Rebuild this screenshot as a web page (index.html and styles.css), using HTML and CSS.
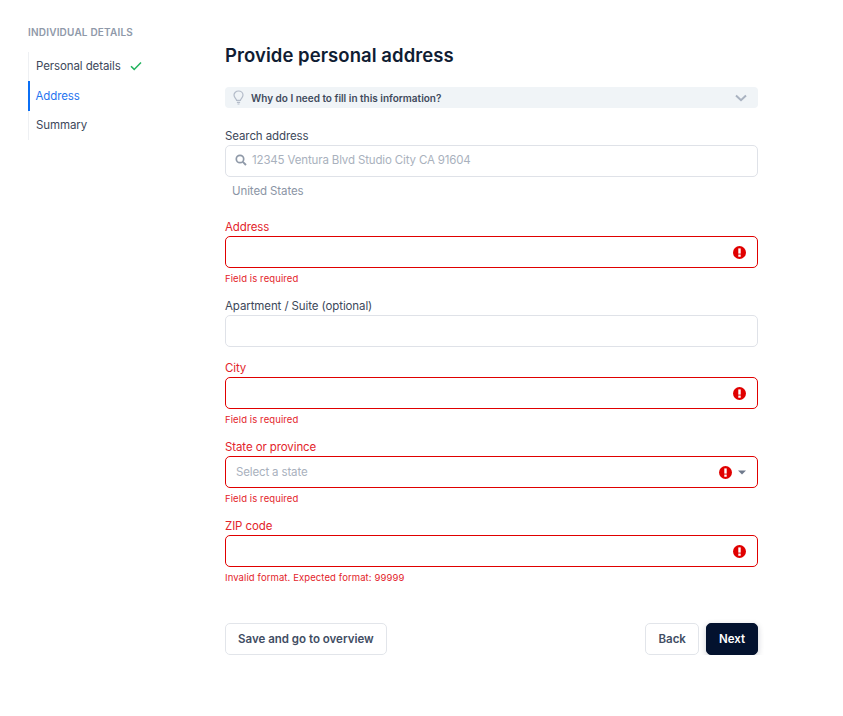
FILE: index.html
```html
<!DOCTYPE html>
<html>
<head>
  <title>Provide personal address</title>
  <link rel="stylesheet" href="styles.css">
</head>
<body>

  <div class="page">

    <div class="sidebar">
      <div class="sidebar-title">INDIVIDUAL DETAILS</div>
      <div class="steps">
        <div class="step">Personal details
          <svg class="check" width="12" height="10" viewBox="0 0 12 10"><path d="M1 5.2 4.2 8.4 11 1.4" fill="none" stroke="#22b35e" stroke-width="1.5"/></svg>
        </div>
        <div class="step active">Address</div>
        <div class="step">Summary</div>
      </div>
    </div>

    <div class="main">
      <h1>Provide personal address</h1>

      <div class="info-bar">
        <svg class="bulb" width="11" height="15" viewBox="0 0 11 15"><path d="M3.6 10.4C3.4 8.6 1 7.6 1 5.1 1 2.8 3 1 5.5 1S10 2.8 10 5.1c0 2.5-2.400 3.500-2.600 5.300z" fill="none" stroke="#b4bcc9" stroke-width="1.200"/><path d="M3.900 12.300h3.200M4.500 14h2" stroke="#b4bcc9" stroke-width="1.200"/></svg>
        <span class="info-text">Why do I need to fill in this information?</span>
        <svg class="chevron" width="12" height="8" viewBox="0 0 12 8"><path d="M1 1.500 6 6.200 11 1.500" fill="none" stroke="#a9b2c0" stroke-width="2"/></svg>
      </div>

      <form class="fields">
        <div class="search-block">
          <label>Search address</label>
          <div class="input search-input">
            <svg class="search-icon" width="12" height="12" viewBox="0 0 12 12"><circle cx="5" cy="5" r="3.700" fill="none" stroke="#8f99a8" stroke-width="1.700"/><path d="M7.800 7.800 11 11" stroke="#8f99a8" stroke-width="1.900"/></svg>
            <span class="placeholder search-placeholder">12345 Ventura Blvd Studio City CA 91604</span>
          </div>
          <div class="country">United States</div>
        </div>

        <div class="field invalid">
          <label>Address</label>
          <div class="input">
            <svg class="alert" width="13" height="13" viewBox="0 0 14 14"><circle cx="7" cy="7" r="7" fill="#e00000"/><rect x="5.700" y="2.600" width="2.600" height="5.600" fill="#fff"/><rect x="5.700" y="9.200" width="2.600" height="2.400" fill="#fff"/></svg>
          </div>
          <div class="error">Field is required</div>
        </div>

        <div class="field">
          <label>Apartment / Suite (optional)</label>
          <div class="input"></div>
        </div>

        <div class="field invalid">
          <label>City</label>
          <div class="input">
            <svg class="alert" width="13" height="13" viewBox="0 0 14 14"><circle cx="7" cy="7" r="7" fill="#e00000"/><rect x="5.700" y="2.600" width="2.600" height="5.600" fill="#fff"/><rect x="5.700" y="9.200" width="2.600" height="2.400" fill="#fff"/></svg>
          </div>
          <div class="error">Field is required</div>
        </div>

        <div class="field invalid">
          <label>State or province</label>
          <div class="input">
            <span class="placeholder">Select a state</span>
            <svg class="alert" width="13" height="13" viewBox="0 0 14 14"><circle cx="7" cy="7" r="7" fill="#e00000"/><rect x="5.700" y="2.600" width="2.600" height="5.600" fill="#fff"/><rect x="5.700" y="9.200" width="2.600" height="2.400" fill="#fff"/></svg>
            <svg class="caret" width="8" height="5" viewBox="0 0 8 5"><path d="M0 .5h8L4 4.500z" fill="#6f7a8c"/></svg>
          </div>
          <div class="error">Field is required</div>
        </div>

        <div class="field invalid">
          <label>ZIP code</label>
          <div class="input">
            <svg class="alert" width="13" height="13" viewBox="0 0 14 14"><circle cx="7" cy="7" r="7" fill="#e00000"/><rect x="5.700" y="2.600" width="2.600" height="5.600" fill="#fff"/><rect x="5.700" y="9.200" width="2.600" height="2.400" fill="#fff"/></svg>
          </div>
          <div class="error">Invalid format. Expected format: 99999</div>
        </div>
      </form>

      <div class="actions">
        <button type="button" class="btn">Save and go to overview</button>
        <div class="actions-right">
          <button type="button" class="btn">Back</button>
          <button type="button" class="btn primary">Next</button>
        </div>
      </div>
    </div>

  </div>

</body>
</html>
```

FILE: styles.css
```css
body {
  font-family: Inter, "Noto Sans", sans-serif;
  background-color: #fff;
  color: #333f52;
  margin: 0;
  padding: 0;
}

.page {
  display: flex;
  padding: 26px 85px 0 28px;
}

.sidebar {
  width: 197px;
  flex-shrink: 0;
}

.sidebar-title {
  font-size: 10px;
  line-height: 13px;
  font-weight: 600;
  color: #8f99a9;
  letter-spacing: 0.2px;
}

.steps {
  margin-top: 12.500px;
  border-left: 1px solid #eef0f3;
}

.step {
  display: flex;
  align-items: center;
  height: 29.500px;
  padding-left: 7px;
  font-size: 11.500px;
  letter-spacing: -0.1px;
  color: #3d485a;
}

.step.active {
  color: #1f74f0;
  border-left: 2px solid #0b6ff5;
  margin-left: -1px;
  padding-left: 5.500px;
}

.check {
  margin-left: 9px;
}

.main {
  flex: 1;
  min-width: 0;
}

h1 {
  font-size: 18.500px;
  line-height: 24px;
  font-weight: 600;
  letter-spacing: 0.06px;
  color: #101d33;
  margin: 17px 0 20px 0;
}

.info-bar {
  display: flex;
  align-items: center;
  height: 21px;
  padding: 0 11px 0 8px;
  background-color: #f0f4f7;
  border-radius: 4px;
}

.info-text {
  margin-left: 7px;
  font-size: 10px;
  font-weight: 600;
  color: #3f4a5c;
}

.chevron {
  margin-left: auto;
}

.fields {
  display: flex;
  flex-direction: column;
  gap: 13px;
  margin-top: 20px;
}

label {
  display: block;
  height: 17px;
  font-size: 11.500px;
  line-height: 17px;
  letter-spacing: -0.1px;
  color: #3d485a;
}

.input {
  display: flex;
  align-items: center;
  box-sizing: border-box;
  height: 32px;
  padding: 0 10px 0 9px;
  border: 1px solid #dfe2e8;
  border-radius: 5px;
  background-color: #fff;
}

.placeholder {
  margin-left: 1px;
  font-size: 11.500px;
  letter-spacing: -0.15px;
  color: #a9b1bd;
}

.search-placeholder {
  margin-bottom: 2px;
}

.search-icon {
  margin: 0 4px 2px 0;
}

.country {
  margin: 7px 0 0 7px;
  font-size: 11.500px;
  line-height: 15px;
  letter-spacing: -0.1px;
  color: #8b95a5;
}

.search-block {
  margin-bottom: 7px;
}

.invalid label {
  color: #e3242b;
}

.invalid .input {
  border-color: #e00000;
}

.alert {
  margin-left: auto;
}

.alert:last-child {
  margin-right: 1px;
}

.caret {
  margin-left: 6.500px;
  margin-right: 1px;
}

.error {
  height: 17px;
  font-size: 9.500px;
  line-height: 21px;
  letter-spacing: 0.1px;
  color: #e3242b;
}

.actions {
  display: flex;
  justify-content: space-between;
  margin-top: 39px;
}

.actions-right {
  display: flex;
  gap: 7px;
}

.btn {
  height: 32px;
  padding: 0 12px;
  font-family: inherit;
  font-size: 11.500px;
  font-weight: 600;
  color: #414d63;
  background-color: #fff;
  border: 1px solid #e2e5ea;
  border-radius: 5px;
}

.primary {
  color: #fff;
  background-color: #03122e;
  border-color: #03122e;
  box-shadow: 0 2px 6px rgba(3, 18, 46, 0.2);
}
```
